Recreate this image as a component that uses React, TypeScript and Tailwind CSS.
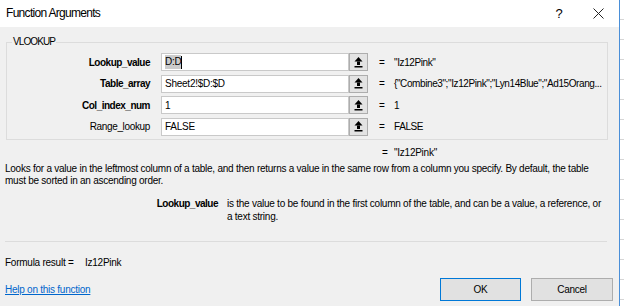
import React from "react";

const font = "font-['Liberation_Sans',Arial,sans-serif] tracking-[-0.25px]";

function RefIcon() {
  return (
    <svg width="9" height="11" viewBox="0 0 9 11" aria-hidden="true">
      <polygon points="4.5,0 8.5,4.5 0.5,4.5" fill="#000" />
      <rect x="3" y="4.5" width="3" height="3.5" fill="#000" />
      <rect x="0.5" y="9" width="8" height="1.5" fill="#000" />
    </svg>
  );
}

type Arg = { name: string; bold: boolean; text: string; selected?: boolean; value: string };

const args: Arg[] = [
  { name: "Lookup_value", bold: true, text: "D:D", selected: true, value: "\"Iz12Pink\"" },
  { name: "Table_array", bold: true, text: "Sheet2!$D:$D", value: "{\"Combine3\";\"Iz12Pink\";\"Lyn14Blue\";\"Ad15Orang..." },
  { name: "Col_index_num", bold: true, text: "1", value: "1" },
  { name: "Range_lookup", bold: false, text: "FALSE", value: "FALSE" },
];

function ArgRow({ arg }: { arg: Arg }) {
  return (
    <div className="flex h-[18px] items-center">
      <div className={`w-[143px] shrink-0 text-right ${arg.bold ? "font-bold tracking-[-0.5px]" : "tracking-[-0.35px]"}`}>
        {arg.name}
      </div>
      <div className="ml-[11px] flex h-full w-[188px] shrink-0 items-center border border-[#c9c9c9] bg-white pl-[3px]">
        {arg.selected ? (
          <>
            <span className="bg-[#cccccc] leading-[14px]">{arg.text}</span>
            <span className="h-[13px] w-px bg-black" />
          </>
        ) : (
          <span>{arg.text}</span>
        )}
      </div>
      <button className="flex h-full w-[19px] shrink-0 items-center justify-center border border-[#adadad] bg-[#e3e3e3]">
        <RefIcon />
      </button>
      <div className="ml-[11px] w-[15px] shrink-0">=</div>
      <div className="whitespace-nowrap tracking-[-0.4px]">{arg.value}</div>
    </div>
  );
}

export default function App() {
  return (
    <div className={`flex h-[306px] w-[624px] overflow-hidden bg-white text-[10px] leading-[15px] text-black ${font}`}>
      {/* dialog */}
      <div className="flex w-[620px] shrink-0 flex-col border-r border-[#4a8fd8]">
        {/* title bar */}
        <div className="flex h-[27px] shrink-0 items-center bg-white pl-[6px] text-[12px] tracking-[-0.7px]">
          <span>Function Arguments</span>
          <span className="ml-auto mr-[31px] text-[13px]">?</span>
          <svg width="11" height="11" viewBox="0 0 11 11" className="mr-[15px]" aria-hidden="true">
            <path d="M0.5 0.5 L10.5 10.5 M10.5 0.5 L0.5 10.5" stroke="#222" strokeWidth="1" />
          </svg>
        </div>

        {/* body */}
        <div className="flex flex-1 flex-col bg-[#f0f0f0] px-[5px]">
          {/* group box */}
          <div className="relative ml-px mr-[6px] mt-[15px] h-[98px] border border-[#dcdcdc] pt-[10px]">
            <span className="absolute left-[5px] top-[-9px] bg-[#f0f0f0] px-px tracking-[-0.9px]">VLOOKUP</span>
            <div className="flex flex-col gap-[3.5px]">
              {args.map((a) => (
                <ArgRow key={a.name} arg={a} />
              ))}
            </div>
          </div>

          <div className="mt-[5px] flex h-[15px] pl-[377px]">
            <span className="w-[12px]">=</span>
            <span>"Iz12Pink"</span>
          </div>

          <p className="mt-[2.5px] pr-[12px] leading-[12px]">
            Looks for a value in the leftmost column of a table, and then returns a value in the same row from a column you specify. By default, the table must be sorted in an ascending order.
          </p>

          <div className="mt-[10.5px] flex leading-[13px]">
            <div className="w-[213px] shrink-0 text-right font-bold tracking-[-0.5px]">Lookup_value</div>
            <p className="ml-[9px] pr-[12px]">
              is the value to be found in the first column of the table, and can be a value, a reference, or a text string.
            </p>
          </div>

          <div className="mr-[7px] mt-auto h-px bg-[#dcdcdc]" />

          <div className="mt-[13px] flex h-[15px] whitespace-nowrap">
            <span className="w-[80px]">Formula result =</span>
            <span>Iz12Pink</span>
          </div>

          <div className="mb-[5px] mt-[8px] flex h-[23px] items-center">
            <a href="#" className="text-[#0066cc] underline">Help on this function</a>
            <button className="ml-auto h-full w-[81px] border border-[#0078d7] bg-[#e1e1e1]">OK</button>
            <button className="ml-[10px] mr-px h-full w-[82px] border border-[#adadad] bg-[#e1e1e1]">Cancel</button>
          </div>
        </div>
      </div>

      {/* spreadsheet behind */}
      <div className="flex flex-1 flex-col bg-white">
        {Array.from({ length: 16 }).map((_, i) => (
          <div key={i} className="h-[20px] shrink-0 border-b border-[#d6d6d6]" />
        ))}
      </div>
    </div>
  );
}
